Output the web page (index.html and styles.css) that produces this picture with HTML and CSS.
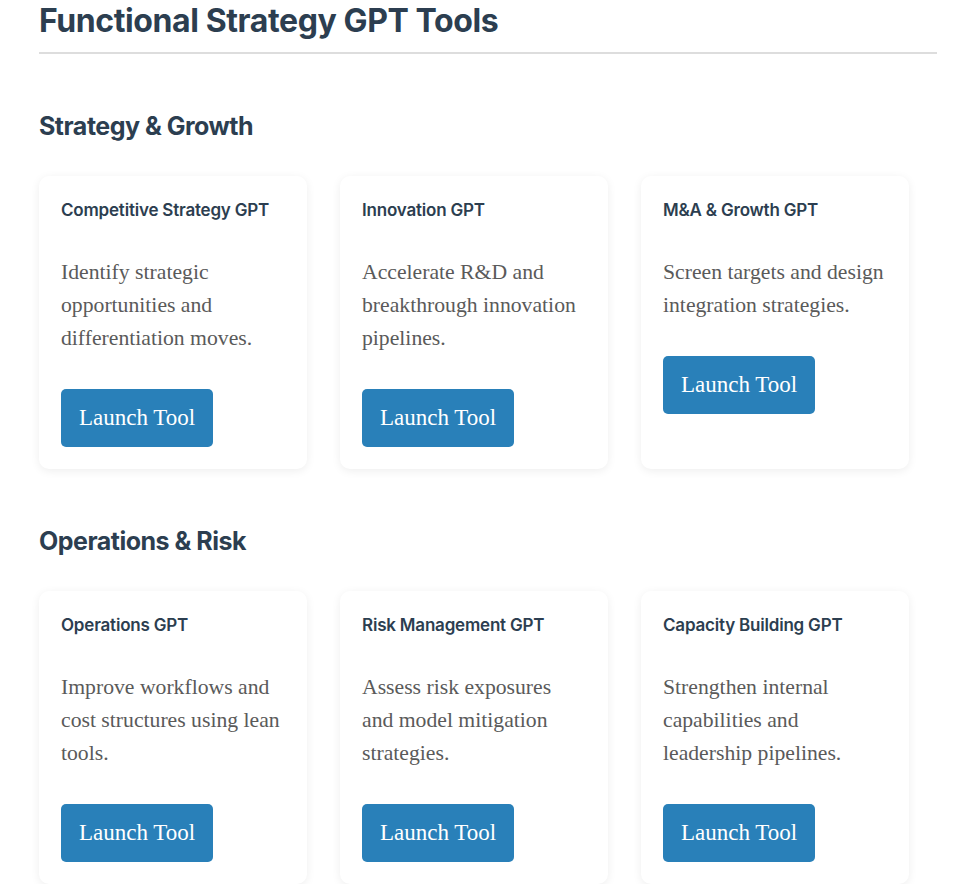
FILE: index.html
```html
<!DOCTYPE html>
<html lang="en">
<head>
<meta charset="UTF-8">
<meta name="viewport" content="width=device-width, initial-scale=1.0">
<title>Functional Strategy GPT Tools</title>
<link rel="stylesheet" href="styles.css">
</head>
<body>
<div class="container">
    <h1>Functional Strategy GPT Tools</h1>

    <section class="group">
        <h2>Strategy &amp; Growth</h2>
        <div class="cards">
            <div class="card">
                <h3>Competitive Strategy GPT</h3>
                <p>Identify strategic opportunities and differentiation moves.</p>
                <a class="btn" href="#">Launch Tool</a>
            </div>
            <div class="card">
                <h3>Innovation GPT</h3>
                <p>Accelerate R&amp;D and breakthrough innovation pipelines.</p>
                <a class="btn" href="#">Launch Tool</a>
            </div>
            <div class="card">
                <h3>M&amp;A &amp; Growth GPT</h3>
                <p>Screen targets and design integration strategies.</p>
                <a class="btn" href="#">Launch Tool</a>
            </div>
        </div>
    </section>

    <section class="group">
        <h2>Operations &amp; Risk</h2>
        <div class="cards">
            <div class="card">
                <h3>Operations GPT</h3>
                <p>Improve workflows and cost structures using lean tools.</p>
                <a class="btn" href="#">Launch Tool</a>
            </div>
            <div class="card">
                <h3>Risk Management GPT</h3>
                <p>Assess risk exposures and model mitigation strategies.</p>
                <a class="btn" href="#">Launch Tool</a>
            </div>
            <div class="card">
                <h3>Capacity Building GPT</h3>
                <p>Strengthen internal capabilities and leadership pipelines.</p>
                <a class="btn" href="#">Launch Tool</a>
            </div>
        </div>
    </section>
</div>
</body>
</html>
```

FILE: styles.css
```css
body {
    margin: 0;
    background: #fff;
    font-family: "Liberation Serif", "Times New Roman", serif;
    color: #555;
}
.container {
    width: 898px;
    padding-left: 39px;
}
h1 {
    font-family: Inter, "Liberation Sans", sans-serif;
    font-size: 32px;
    font-weight: 700;
    letter-spacing: -0.4px;
    line-height: 1.2;
    color: #2c3e50;
    margin: 0;
    padding: 2px 0 12px;
    border-bottom: 2px solid #ddd;
}
h2 {
    font-family: Inter, "Liberation Sans", sans-serif;
    font-size: 25px;
    font-weight: 700;
    letter-spacing: -0.5px;
    line-height: 1.2;
    color: #2c3e50;
    margin: 57px 0 35px;
}
.cards {
    display: grid;
    grid-template-columns: repeat(3, 268px);
    gap: 33px;
}
.card {
    background: #fff;
    border-radius: 10px;
    box-shadow: 0 2px 10px rgba(0, 0, 0, 0.07);
    padding: 24px 22px 22px;
    display: flex;
    flex-direction: column;
    align-items: flex-start;
}
.card h3 {
    font-family: Inter, "Liberation Sans", sans-serif;
    font-size: 17px;
    font-weight: 600;
    letter-spacing: -0.2px;
    color: #2c3e50;
    margin: 0 0 36px;
}
.card p {
    font-size: 21.7px;
    line-height: 33px;
    color: #5a5a5a;
    margin: 0 0 34px;
}
.btn {
    display: inline-block;
    background-color: #2980b9;
    color: #fff;
    text-decoration: none;
    font-size: 23px;
    line-height: 34px;
    padding: 12px 18px;
    border-radius: 5px;
}
```
